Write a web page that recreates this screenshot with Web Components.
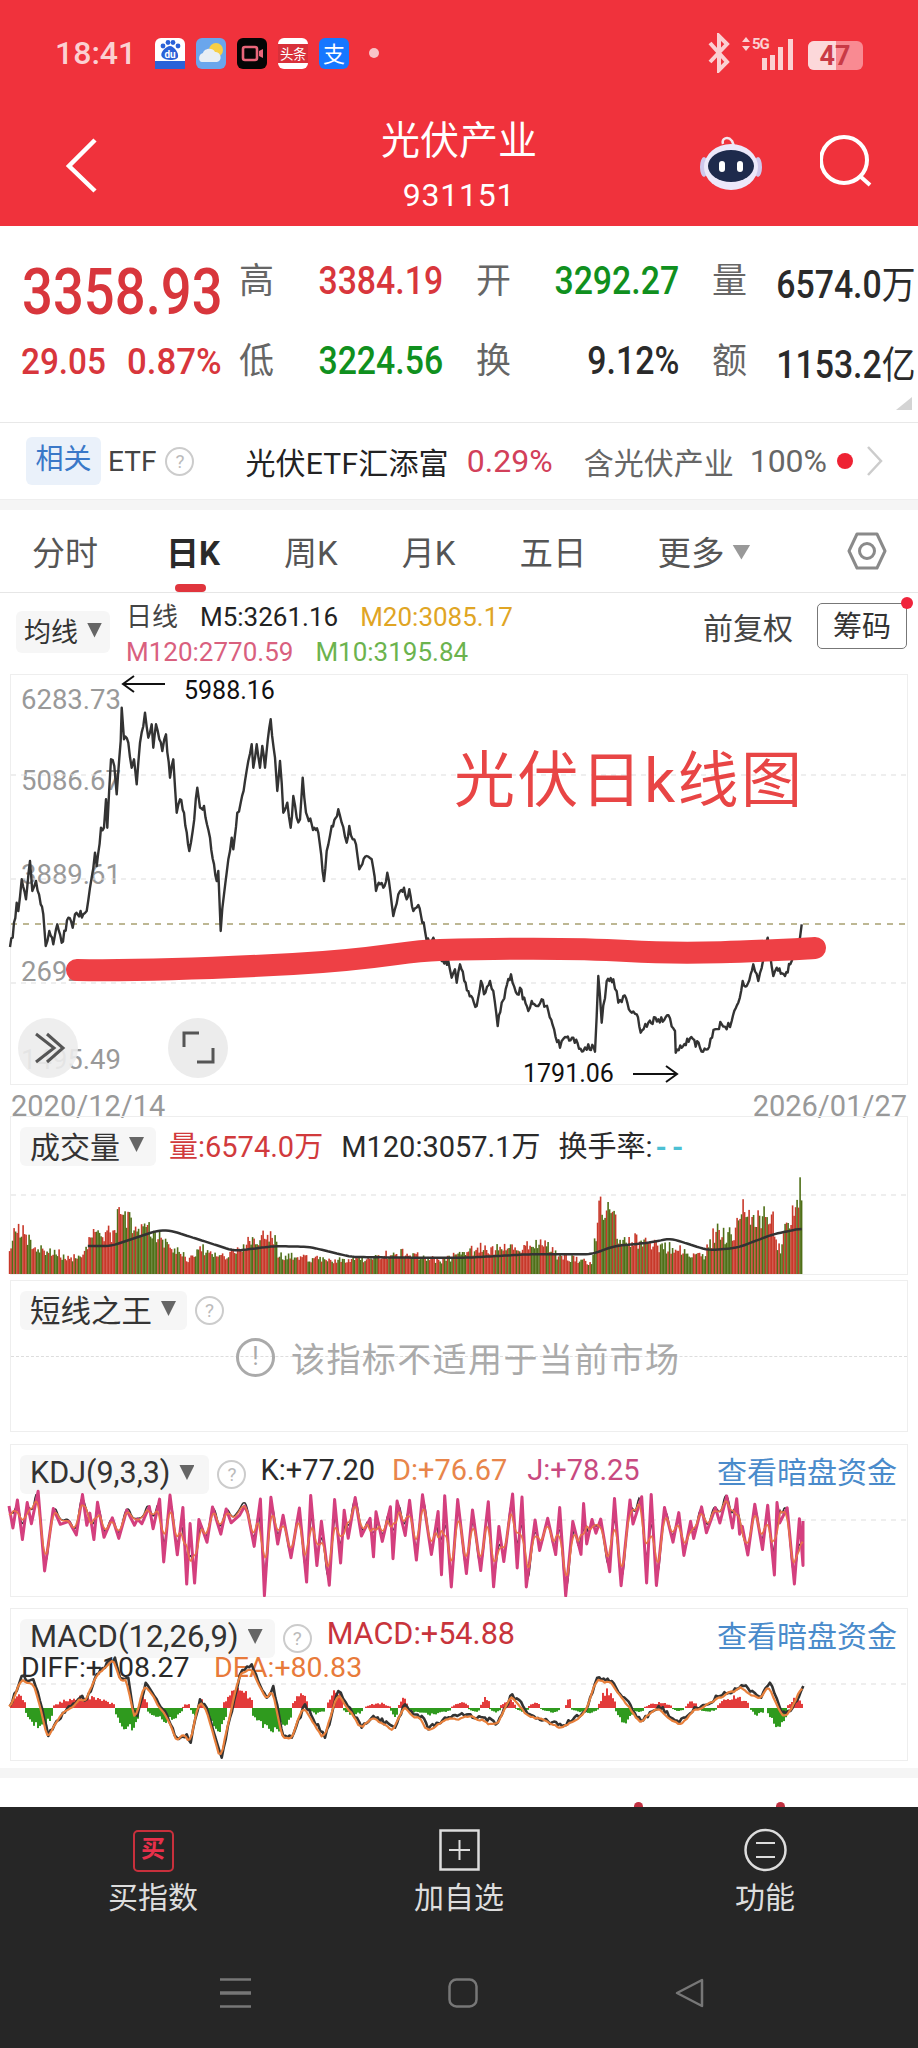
<!DOCTYPE html>
<html lang="zh">
<head>
<meta charset="utf-8">
<title>光伏产业</title>
<style>
  html, body { margin: 0; background: #fff; }
  body { width: 918px; height: 2048px; overflow: hidden; font-family: Roboto, "Noto Sans CJK SC", sans-serif; color: #2a2a2a; }
  .t { font-size: 29px; margin-top: -5px; }
  .link { margin-left: auto; color: #4a8bcb; font-size: 30px; margin-top: -10px; }
</style>
</head>
<body>
<top-header></top-header>
<quote-panel></quote-panel>
<etf-strip></etf-strip>
<grey-band></grey-band>
<period-tabs></period-tabs>
<ma-legend></ma-legend>
<price-chart></price-chart>
<date-axis></date-axis>

<indicator-panel height="159">
  <drop-chip slot="head">成交量</drop-chip>
  <span slot="head" class="t" style="margin-left:13px;color:#d13a3c">量:6574.0万</span>
  <span slot="head" class="t" style="margin-left:18px">M120:3057.1万</span>
  <span slot="head" class="t" style="margin-left:18px">换手率:<span style="color:#4cc0d4;font-weight:700;letter-spacing:5px;margin-left:3px">--</span></span>
  <volume-chart></volume-chart>
</indicator-panel>

<indicator-panel height="152" style="margin-top:5px">
  <drop-chip slot="head" style="--chip-font:30.5px;--chip-r:11px">短线之王</drop-chip>
  <help-mark slot="head" style="margin-left:8px"></help-mark>
  <notice-line></notice-line>
</indicator-panel>

<indicator-panel height="153" style="margin-top:12px">
  <drop-chip slot="head" style="--chip-font:30.5px;--chip-r:15px">KDJ(9,3,3)</drop-chip>
  <help-mark slot="head" style="margin-left:8px"></help-mark>
  <span slot="head" class="t" style="margin-left:14px;margin-top:-9px">K:+77.20</span>
  <span slot="head" class="t" style="margin-left:17px;color:#e8854a;margin-top:-9px">D:+76.67</span>
  <span slot="head" class="t" style="margin-left:20px;color:#c84a80;margin-top:-9px">J:+78.25</span>
  <span slot="head" class="link">查看暗盘资金</span>
  <kdj-chart></kdj-chart>
</indicator-panel>

<indicator-panel height="153" style="margin-top:11px">
  <drop-chip slot="head" style="--chip-font:31px">MACD(12,26,9)</drop-chip>
  <help-mark slot="head" style="margin-left:8px"></help-mark>
  <span slot="head" style="margin-left:15px;color:#c8343c;font-size:30.6px;margin-top:-10px">MACD:+54.88</span>
  <span slot="head" class="link">查看暗盘资金</span>
  <macd-chart></macd-chart>
</indicator-panel>

<grey-band style="margin-top:7px"></grey-band>
<peek-strip></peek-strip>
<bottom-bar></bottom-bar>

<script>
// small seeded random so the charts come out the same on every load
function seeded(s) {
  return () => {
    s |= 0; s = s + 0x6D2B79F5 | 0;
    let t = Math.imul(s ^ s >>> 15, 1 | s);
    t = t + Math.imul(t ^ t >>> 7, 61 | t) ^ t;
    return ((t ^ t >>> 14) >>> 0) / 4294967296;
  };
}
const toPath = pts => pts.map(p => p[0].toFixed(1) + ',' + p[1].toFixed(1)).join(' ');
function resample(pts, step) {
  const out = [];
  let i = 0;
  for (let x = pts[0][0]; x <= pts[pts.length - 1][0]; x += step) {
    while (i < pts.length - 2 && pts[i + 1][0] < x) i++;
    const a = pts[i], b = pts[i + 1];
    const t = b[0] === a[0] ? 0 : (x - a[0]) / (b[0] - a[0]);
    out.push([x, a[1] + (b[1] - a[1]) * t]);
  }
  return out;
}
function smooth(pts, w) {
  return pts.map((p, i) => {
    let sum = 0, n = 0;
    for (let j = Math.max(0, i - w); j <= Math.min(pts.length - 1, i + w); j++) { sum += pts[j][1]; n++; }
    return [p[0], sum / n];
  });
}
// keeps the given turning points, puts daily noise on the way between them
function roughen(pts, step, amp, rnd) {
  const out = [];
  pts.forEach((p, i) => {
    out.push(p);
    const n = pts[i + 1];
    if (!n) return;
    const count = Math.floor((n[0] - p[0]) / step);
    for (let k = 1; k < count; k++) {
      const t = k / count;
      out.push([p[0] + (n[0] - p[0]) * t, p[1] + (n[1] - p[1]) * t + (rnd() - .5) * amp]);
    }
  });
  return out;
}

class Base extends HTMLElement {
  constructor() {
    super();
    this.attachShadow({ mode: 'open' });
  }
  connectedCallback() {
    this.shadowRoot.innerHTML = this.render();
  }
}

class DropChip extends Base {
  render() {
    return `<style>
      :host { display: inline-flex; align-items: center; box-sizing: border-box; gap: var(--chip-gap, 9px); height: var(--chip-h, 39px); padding: 0 var(--chip-r, 12px) 4px var(--chip-l, 10px);
        background: #f6f6f6; border-radius: 6px; font-size: var(--chip-font, 30px); color: #333; white-space: nowrap; flex: none; }
      i { width: 15px; height: 15px; background: #666; clip-path: polygon(0 0, 100% 0, 50% 100%); }
    </style><slot></slot><i></i>`;
  }
}

class HelpMark extends Base {
  render() {
    return `<style>
      :host { display: inline-flex; align-items: center; justify-content: center; box-sizing: border-box; width: 29px; height: 29px; border: 2px solid #ccc;
        border-radius: 50%; color: #bbb; font-size: 19px; flex: none; }
    </style>?`;
  }
}

class TopHeader extends Base {
  render() {
    return `<style>
      :host { display: block; height: 226px; background: #f0323c; color: #fff; }
      .status { display: flex; align-items: center; height: 106px; padding-left: 55px; }
      .time { font-size: 32px; color: #fbd0d2; width: 100px; font-weight: 500; }
      .apps { display: flex; gap: 11px; align-items: center; }
      .apps svg { display: block; }
      .dot { width: 10px; height: 10px; border-radius: 50%; background: #f8c4c8; margin-left: 20px; }
      .right { margin-left: auto; margin-right: 50px; display: block; }
      .nav { display: grid; grid-template-columns: 1fr auto 1fr; height: 120px; }
      .back { margin: 31px 0 0 64px; }
      .title { text-align: center; }
      .name { font-size: 39px; line-height: 50px; margin-top: 10px; }
      .code { font-size: 32px; line-height: 36px; margin-top: 11px; letter-spacing: .8px; }
      .tools { display: flex; justify-content: flex-end; align-items: flex-start; padding: 29px 46px 0 0; gap: 58px; }
    </style>
    <div class="status">
      <span class="time">18:41</span>
      <span class="apps">
        <svg width="30" height="31" viewBox="0 0 30 31"><rect width="30" height="31" rx="6" fill="#fff"/><rect y="23" width="30" height="8" fill="#2a62d8"/><circle cx="8" cy="8" r="2.4" fill="#2a62d8"/><circle cx="13" cy="4.5" r="2.4" fill="#2a62d8"/><circle cx="18" cy="4.5" r="2.4" fill="#2a62d8"/><circle cx="23" cy="8" r="2.4" fill="#2a62d8"/><path d="M15 8c4 0 9 7 8 11s-13 4-16 0 4-11 8-11z" fill="#2a62d8"/><text x="15" y="20" font-size="10" font-weight="700" text-anchor="middle" fill="#fff">du</text></svg>
        <svg width="30" height="31" viewBox="0 0 30 31"><rect width="30" height="31" rx="6" fill="#6aa6ec"/><circle cx="20" cy="12" r="7" fill="#f7cf45"/><path d="M6 24c-4 0-4-8 1-9 1-5 10-6 12-1 6-1 8 9 2 10z" fill="#e8eef4"/></svg>
        <svg width="30" height="31" viewBox="0 0 30 31"><rect width="30" height="31" rx="6" fill="#050505"/><rect x="6" y="9" width="14" height="13" rx="2" fill="none" stroke="#e8667a" stroke-width="2.6"/><path d="M22 13l4-2v9l-4-2z" fill="#e8667a"/></svg>
        <svg width="30" height="31" viewBox="0 0 30 31"><rect width="30" height="31" rx="6" fill="#fff"/><rect y="6" width="30" height="19" fill="#d8303a"/><text x="15" y="21" font-size="13.5" text-anchor="middle" fill="#fff" letter-spacing="-.5">头条</text></svg>
        <svg width="30" height="31" viewBox="0 0 30 31"><rect width="30" height="31" rx="6" fill="#1677ff"/><text x="15" y="24" font-size="22" text-anchor="middle" fill="#fff">支</text></svg>
      </span>
      <span class="dot"></span>
      <svg class="right" width="160" height="40" viewBox="0 0 160 40">
        <path d="M2 10l17 19-8 8V3l8 8L2 29" fill="none" stroke="#fbd0d2" stroke-width="4"/>
        <path d="M34 9l4-5 4 5zM34 13l4 5 4-5z" fill="#fbd0d2"/>
        <text x="44" y="16" font-size="15" font-weight="700" fill="#fbd0d2" letter-spacing="-1">5G</text>
        <rect x="54" y="25" width="5" height="12" fill="#fbd0d2"/><rect x="62" y="22" width="5" height="15" fill="#fbd0d2"/>
        <rect x="70" y="14" width="5" height="23" fill="#fbd0d2"/><rect x="80" y="6" width="5" height="31" fill="#fbd0d2"/>
        <rect x="100" y="8" width="55" height="29" rx="6" fill="#f98a92"/>
        <path d="M106 8h22v29h-22a6 6 0 0 1-6-6V14a6 6 0 0 1 6-6z" fill="#fcd8da"/>
        <text x="127" y="32" font-size="27" font-weight="700" text-anchor="middle" fill="#c93a46">47</text>
      </svg>
    </div>
    <div class="nav">
      <svg class="back" width="34" height="56" viewBox="0 0 34 56"><path d="M31 3L5 29l26 25" fill="none" stroke="#fff" stroke-width="4.5"/></svg>
      <div class="title"><div class="name">光伏产业</div><div class="code">931151</div></div>
      <div class="tools">
        <svg width="62" height="55" viewBox="0 0 62 55">
          <path d="M23 9c-2-6 5-8 9-3l2 5" fill="none" stroke="#f3e6ee" stroke-width="2.5"/>
          <ellipse cx="4" cy="32" rx="4" ry="10" fill="#cfc8ec"/><ellipse cx="58" cy="32" rx="4" ry="10" fill="#cfc8ec"/>
          <ellipse cx="31" cy="32" rx="27" ry="23" fill="#ece8fa"/>
          <ellipse cx="31" cy="31" rx="23" ry="16" fill="#1e2a4c"/>
          <rect x="19" y="26" width="6" height="11" rx="3" fill="#fff"/><rect x="37" y="26" width="6" height="11" rx="3" fill="#fff"/>
        </svg>
        <svg width="52" height="52" viewBox="0 0 52 52"><circle cx="24" cy="25" r="23" fill="none" stroke="#fff" stroke-width="4"/><path d="M41 42l9 8" stroke="#fff" stroke-width="4"/></svg>
      </div>
    </div>`;
  }
}

class QuotePanel extends Base {
  render() {
    const row = (l1, v1, c1, l2, v2, c2, l3, v3) => `
      <span class="lb">${l1}</span><span class="v ${c1}"><b>${v1}</b></span>
      <span class="lb p">${l2}</span><span class="v ${c2}"><b>${v2}</b></span>
      <span class="lb p">${l3}</span><span class="v"><b>${v3}</b></span>`;
    return `<style>
      :host { display: block; position: relative; box-sizing: border-box; height: 197px; padding-top: 15px; border-bottom: 1px solid #e8e8e8; }
      .grid { display: grid; grid-template-columns: 240px 34px 169px 68px 168px 70px 167px; grid-template-rows: 80px 80px; align-items: center; }
      .lb { font-size: 35px; color: #666; line-height: 40px; margin-left: -1px; margin-top: 2px; }
      .p { padding-left: 34px; }
      .v { text-align: right; font-size: 38px; color: #2a2a2a; white-space: nowrap; }
      .v b { display: inline-block; font-weight: 500; transform: scaleX(.89); transform-origin: right center; }
      .v u { text-decoration: none; font-weight: 400; }
      .r { color: #d8363c; } .g { color: #10901e; }
      .big { padding-left: 22px; font-size: 64px; color: #d8363c; white-space: nowrap; margin-top: 22px; }
      .big b { display: inline-block; font-weight: 500; transform: scaleX(.85); transform-origin: left center; }
      .sub { padding-left: 21px; font-size: 37px; color: #d8363c; white-space: nowrap; display: flex; }
      .sub b { display: inline-block; font-weight: 500; transform: scaleX(.9); transform-origin: left center; width: 106px; }
      .sub b + b { transform: scaleX(.94); }
      .corner { position: absolute; right: 6px; bottom: 12px; width: 16px; height: 13px; background: #d4d4d4; clip-path: polygon(100% 0, 100% 100%, 0 100%); }
    </style>
    <div class="grid">
      <div class="big"><b>3358.93</b></div>${row('高', '3384.19', 'r', '开', '3292.27', 'g', '量', '6574.0<u>万</u>')}
      <div class="sub"><b>29.05</b><b>0.87%</b></div>${row('低', '3224.56', 'g', '换', '9.12%', '', '额', '1153.2<u>亿</u>')}
    </div><i class="corner"></i>`;
  }
}

class EtfStrip extends Base {
  render() {
    return `<style>
      :host { display: flex; align-items: center; box-sizing: border-box; height: 77px; padding-left: 26px; border-bottom: 1px solid #eee; white-space: nowrap; position: relative; }
      .tag { width: 75px; height: 48px; line-height: 46px; text-align: center; background: #eaf1fa; color: #3a78c8; border-radius: 6px; font-size: 28px; }
      .etf { margin-left: 7px; font-size: 28px; color: #444; }
      .name { margin-left: 51px; font-size: 30px; color: #222; letter-spacing: .2px; }
      .pct { margin-left: 18px; font-size: 32px; color: #d2405a; }
      .has { margin-left: 31px; font-size: 30px; color: #666; }
      .all { margin-left: 16px; font-size: 32px; color: #666; }
      .dot { width: 16px; height: 16px; border-radius: 50%; background: #ee2233; margin-left: 10px; }
      svg { margin-left: 14px; }
    </style>
    <span class="tag">相关</span><span class="etf">ETF</span><help-mark style="margin-left:9px"></help-mark>
    <span class="name">光伏ETF汇添富</span><span class="pct">0.29%</span><span class="has">含光伏产业</span><span class="all">100%</span>
    <i class="dot"></i>
    <svg width="16" height="30" viewBox="0 0 16 30"><path d="M1 1l13 14L1 29" fill="none" stroke="#ccc" stroke-width="2.5"/></svg>`;
  }
}

class GreyBand extends Base {
  render() {
    return `<style>:host { display: block; height: 10px; background: #f5f5f5; }</style>`;
  }
}

class PeriodTabs extends Base {
  render() {
    return `<style>
      :host { display: flex; align-items: flex-start; box-sizing: border-box; height: 83px; padding: 24px 0 0 32px; border-bottom: 1px solid #e6e6e6; font-size: 33px; color: #555; gap: 64px; white-space: nowrap; position: relative; }
      span { line-height: 40px; }
      .on { font-weight: 700; color: #2a2a2a; position: relative; margin-left: 4px; }
      .on::after { content: ""; position: absolute; left: 9px; top: 50px; width: 31px; height: 8px; border-radius: 4px; background: #e0353d; }
      .five { font-size: 33.5px; }
      .more { margin-left: 7px; display: flex; align-items: center; gap: 8px; font-size: 33.5px; height: 40px; }
      .more i { width: 18px; height: 15px; background: #999; clip-path: polygon(0 0, 100% 0, 50% 100%); margin-top: -4px; }
      svg { position: absolute; left: 847px; top: 22px; }
    </style>
    <span>分时</span><span class="on">日K</span><span>周K</span><span>月K</span><span class="five">五日</span><span class="more">更多<i></i></span>
    <svg width="40" height="38" viewBox="0 0 40 38"><path d="M10 2h20l8 17-8 17H10L2 19z" fill="none" stroke="#8a8a8a" stroke-width="3" stroke-linejoin="round"/><circle cx="20" cy="19" r="7.5" fill="none" stroke="#8a8a8a" stroke-width="3"/></svg>`;
  }
}

class MaLegend extends Base {
  render() {
    return `<style>
      :host { display: flex; box-sizing: border-box; height: 81px; padding-left: 16px; white-space: nowrap; font-size: 26px; position: relative; }
      drop-chip { --chip-h: 42px; --chip-font: 27px; --chip-l: 8px; --chip-r: 8px; margin-top: 18px; }
      .lines { margin-left: 16px; padding-top: 7px; line-height: 35px; }
      .l { display: flex; gap: 22px; }
      .right { margin-left: auto; padding: 10px 11px 0 0; display: flex; align-items: center; height: 46px; gap: 24px; font-size: 30px; color: #444; }
      .btn { position: relative; box-sizing: border-box; width: 90px; height: 46px; line-height: 47px; text-align: center; border: 1px solid #777; border-radius: 5px; color: #333; font-size: 29px; }
      .btn::after { content: ""; position: absolute; right: -7px; top: -7px; width: 12px; height: 12px; border-radius: 50%; background: #f0243c; }
    </style>
    <drop-chip>均线</drop-chip>
    <div class="lines">
      <div class="l"><span style="color:#444">日线</span><span style="color:#222">M5:3261.16</span><span style="color:#e0a524">M20:3085.17</span></div>
      <div class="l"><span style="color:#d9607e">M120:2770.59</span><span style="color:#6cb34e">M10:3195.84</span></div>
    </div>
    <div class="right"><span>前复权</span><span class="btn">筹码</span></div>`;
  }
}

class PriceChart extends Base {
  render() {
    const left = [[30,798],[38,770],[50,665],[55,690],[65,595],[78,655],[90,540],[97,630],[108,600],[122,670],[130,700],[137,795],[148,750],[160,790],[172,730],[185,785],[205,710],[218,740],[225,700],[250,700],[260,690],[270,620],[285,515],[290,555],[303,440],[312,440],[318,355],[322,440],[333,235],[343,255],[350,340],[362,180],[365,80],[372,175],[385,185],[395,260],[402,235],[410,310],[420,185],[435,95],[445,170],[455,130],[460,200],[468,130],[478,175],[487,210],[498,160],[510,290],[520,235],[530,395],[540,355],[552,395],[568,510],[578,450],[592,320],[600,380],[612,375],[630,470],[650,600],[655,570],[662,750],[672,640],[680,575],[695,470],[700,505],[712,395],[722,365],[735,300],[745,240],[755,190],[760,260],[770,190],[780,260],[787,195],[795,260],[812,115],[825,230],[832,330],[840,240],[850,395],[862,365],[872,440],[880,345],[890,410],[900,415],[908,290],[918,395],[935,430],[955,455],[972,600],[980,510],[995,435],[1015,385],[1025,425],[1040,485],[1048,435],[1058,475],[1068,490],[1078,565],[1100,525],[1115,535],[1128,630],[1140,610],[1150,620],[1162,575],[1180,705],[1195,640],[1212,620],[1220,655],[1228,625]];
    const right = [[10,690],[25,672],[45,750],[50,780],[70,770],[95,840],[115,840],[125,890],[135,865],[140,905],[150,850],[175,930],[200,975],[213,900],[222,940],[240,900],[250,930],[263,1035],[275,965],[303,880],[322,940],[330,920],[355,990],[365,960],[385,975],[395,955],[415,990],[450,1100],[465,1068],[490,1070],[520,1110],[535,1090],[555,1112],[565,885],[575,1025],[590,900],[610,895],[625,965],[640,945],[665,995],[680,1000],[692,1055],[715,1025],[745,1015],[780,1012],[795,1050],[797,1115],[815,1100],[840,1072],[870,1100],[893,1105],[915,1045],[935,1030],[950,1045],[965,1020],[985,965],[998,900],[1010,915],[1030,850],[1045,900],[1060,835],[1073,770],[1090,885],[1100,860],[1125,885],[1145,840],[1170,770],[1175,730]];
    const rnd = seeded(7);
    const raw = left.map(p => [p[0] / 3, 680 + p[1] / 3]).concat(right.map(p => [410 + p[0] / 3, 680 + p[1] / 3]));
    const line = roughen(raw, 1.3, 8, rnd);
    const labels = [['6283.73', 698], ['5086.67', 779], ['3889.61', 873], ['2692.55', 970], ['1495.49', 1058]];
    const grid = [774, 878, 982].map(y => `<line x1="11" x2="907" y1="${y}" y2="${y}" stroke="#ddd" stroke-width="1" stroke-dasharray="5 5"/>`).join('');
    return `<style>
      :host { display: block; position: relative; height: 411px; }
      .frame { box-sizing: border-box; height: 411px; margin: 0 10px; border: 1px solid #eee; }
      svg { position: absolute; left: 0; top: 0; }
      span { position: absolute; white-space: nowrap; transform: translateY(-50%); }
      .ax { left: 21px; font-size: 27.5px; color: #999; }
      .note { font-size: 25px; color: #111; }
      .big { left: 454px; top: 101px; font-size: 61px; letter-spacing: 2.4px; color: #e84545; }
    </style>
    <div class="frame"></div>
    ${labels.map(l => `<span class="ax" style="top:${l[1] - 673}px">${l[0]}</span>`).join('')}
    <svg width="918" height="411" viewBox="0 673 918 411">
      ${grid}
      <line x1="11" x2="907" y1="923" y2="923" stroke="#a8a070" stroke-width="1.5" stroke-dasharray="6 6"/>
      <polyline points="${toPath(line)}" fill="none" stroke="#333" stroke-width="2.4" stroke-linejoin="round"/>
      <path d="M77 969C140 970 200 968 293 963S400 950 440 949 560 946 627 950 760 950 815 947" fill="none" stroke="#ee4045" stroke-width="22" stroke-linecap="round"/>
      <path d="M165 683H123M134 675l-11 8 11 8" fill="none" stroke="#111" stroke-width="2"/>
      <path d="M633 1073H677M666 1065l11 8-11 8" fill="none" stroke="#111" stroke-width="2"/>
      <circle cx="48" cy="1047" r="30" fill="#ececec" fill-opacity=".9"/>
      <path d="M36 1033l18 14-18 14M47 1033l16 14-16 14" fill="none" stroke="#555" stroke-width="3"/>
      <circle cx="198" cy="1047" r="30" fill="#ececec"/>
      <path d="M199 1032h-15v14M197 1061h16v-14" fill="none" stroke="#555" stroke-width="3"/>
    </svg>
    <span class="big">光伏日k线图</span>
    <span class="note" style="left:184px;top:16px">5988.16</span>
    <span class="note" style="left:523px;top:399px">1791.06</span>`;
  }
}

class DateAxis extends Base {
  render() {
    return `<style>
      :host { display: flex; justify-content: space-between; box-sizing: border-box; height: 31px; padding: 5px 11px 0; font-size: 29px; line-height: 32px; color: #999; }
    </style><span>2020/12/14</span><span>2026/01/27</span>`;
  }
}

class IndicatorPanel extends Base {
  render() {
    const h = this.getAttribute('height');
    return `<style>
      :host { display: block; position: relative; box-sizing: border-box; height: ${h}px; margin: 0 10px; border: 1px solid #eee; }
      .head { display: flex; align-items: center; height: 39px; padding: 10px 10px 0 9px; white-space: nowrap; color: #2a2a2a; }
    </style>
    <div class="head"><slot name="head"></slot></div>
    <slot></slot>`;
  }
}

class VolumeChart extends Base {
  render() {
    const env = [[15,400],[28,305],[45,350],[60,400],[90,400],[110,430],[140,425],[155,350],[190,340],[210,240],[230,340],[250,310],[270,350],[290,390],[320,430],[340,390],[370,430],[400,400],[430,360],[465,340],[475,420],[520,430],[600,440],[680,410],[750,440],[820,390],[880,400],[925,370],[950,420],[1010,450],[1022,250],[1035,280],[1042,180],[1055,380],[1080,365],[1110,380],[1160,400],[1200,430],[1220,335],[1250,350],[1268,260],[1290,300],[1313,245],[1330,400],[1360,205],[1370,190]]
      .map(p => [p[0] / 1.708, 1110 + p[1] / 3]);
    const ma = [[150,405],[190,405],[270,358],[290,358],[330,380],[400,420],[470,405],[530,408],[600,438],[700,440],[800,440],[900,430],[1010,430],[1050,405],[1110,395],[1145,382],[1210,418],[1260,410],[1320,370],[1370,352]]
      .map(p => [p[0] / 1.708, 1110 + p[1] / 3]);
    const rnd = seeded(21);
    const bars = resample(env, 1.5).map(p => {
      const base = 1273;
      const top = base - (base - p[1]) * (.6 + .4 * rnd());
      return `<rect x="${p[0].toFixed(1)}" y="${top.toFixed(1)}" width="1.6" height="${(base - top).toFixed(1)}" fill="${rnd() < .55 ? '#c8382a' : '#4f6f18'}"/>`;
    }).join('');
    return `<style>
      :host { display: block; }
      svg { position: absolute; left: -11px; top: -1px; }
    </style>
    <svg width="918" height="159" viewBox="0 1115 918 159">
      <line x1="11" x2="907" y1="1194" y2="1194" stroke="#ddd" stroke-dasharray="5 5"/>
      ${bars}
      <polyline points="${toPath(smooth(resample(ma, 3), 2))}" fill="none" stroke="#333" stroke-width="2.5"/>
    </svg>`;
  }
}

class NoticeLine extends Base {
  render() {
    return `<style>
      :host { display: block; position: relative; }
      .g { position: absolute; left: 0; right: 0; top: 26px; border-top: 1px dashed #ddd; }
      .m { position: absolute; left: 225px; top: 7px; display: flex; align-items: center; height: 40px; color: #aaa; white-space: nowrap; font-size: 34px; letter-spacing: 1.4px; }
      .c { box-sizing: border-box; width: 39px; height: 39px; border: 3px solid #aaa; border-radius: 50%; text-align: center; line-height: 32px; font-size: 25px; margin-right: 16px; letter-spacing: 0; }
    </style><div class="g"></div><div class="m"><span class="c">!</span>该指标不适用于当前市场</div>`;
  }
}

class KdjChart extends Base {
  render() {
    const rnd = seeded(29);
    const turns = [[9, 1505]];
    let x = 9, up = false;
    while (x < 803) {
      x += 2.5 + rnd() * 6.5;
      const flat = x > 225 && x < 252;
      let y;
      if (flat) y = 1504 + rnd() * 20;
      else if (up) y = 1490 + rnd() * 36;
      else y = 1522 + 73 * Math.pow(rnd(), 1.4);
      turns.push([Math.min(x, 803), Math.min(y, 1595)]);
      up = !up;
    }
    turns.push([803, 1520]);
    const fine = resample(turns, 1);
    const k = smooth(fine, 3).map(p => [p[0], 1532 + (p[1] - 1532) * 1.3]);
    const d = smooth(fine, 4).map(p => [p[0], 1532 + (p[1] - 1532) * 1.2]);
    return `<style>
      :host { display: block; }
      svg { position: absolute; left: -11px; top: -1px; }
    </style>
    <svg width="918" height="153" viewBox="0 1443 918 153">
      <line x1="11" x2="907" y1="1519" y2="1519" stroke="#ddd" stroke-dasharray="5 5"/>
      <polyline points="${toPath(k)}" fill="none" stroke="#333" stroke-width="1.5"/>
      <polyline points="${toPath(turns)}" fill="none" stroke="#d43f7e" stroke-width="3" stroke-linejoin="round"/>
      <polyline points="${toPath(d)}" fill="none" stroke="#e8734a" stroke-width="1.6"/>
    </svg>`;
  }
}

class MacdChart extends Base {
  render() {
    const a = [[30,255],[50,210],[65,165],[85,180],[100,175],[120,240],[145,345],[170,300],[200,265],[240,230],[260,235],[290,160],[345,110],[360,170],[385,170],[400,270],[412,285],[437,185],[470,235],[500,280],[530,350],[560,340],[572,365],[600,235],[620,260],[640,330],[665,410],[690,290],[720,160],[755,130],[800,230],[820,195],[850,345],[875,350],[915,250],[940,295],[975,350],[1015,210],[1050,260],[1085,320],[1120,285],[1185,320],[1215,250],[1240,280],[1265,285],[1285,325],[1310,305]]
      .map(p => [p[0] / 3, 1620 + p[1] / 3]);
    const b = [[770,890],[800,880],[850,905],[875,820],[905,880],[960,915],[1000,870],[1020,770],[1045,780],[1095,900],[1125,855],[1160,905],[1190,860],[1230,825],[1270,795],[1300,830],[1315,785],[1335,875],[1350,870],[1372,795]]
      .map(p => [p[0] / 1.708, 1420 + p[1] / 3]);
    const rnd = seeded(3);
    const all = a.concat(b);
    const diff = roughen(all, 2, 5, rnd);
    const dea = smooth(roughen(all, 2, 6, rnd), 1).map(p => [p[0] - 1, p[1] + 2]);
    const segs = [[10,25,15],[25,53,-23],[53,115,13],[115,138,-27],[138,147,13],[147,182,-15],[182,190,5],[190,197,-10],[197,203,10],[207,227,-25],[223,252,23],[252,292,-27],[292,307,17],[307,325,-7],[327,343,20],[343,363,-8],[365,390,6],[390,398,-10],[398,407,12],[407,451,-8],[451,468,7],[468,480,-5],[480,489,13],[489,500,-5],[500,515,10],[515,528,-4],[528,540,7],[540,560,-5],[565,571,10],[571,598,-6],[598,615,20],[615,632,-17],[632,644,-5],[644,672,6],[672,684,-4],[685,697,8],[697,717,-4],[717,749,13],[750,764,-8],[767,787,-20],[787,803,11]];
    let bars = '';
    segs.forEach(s => {
      for (let x = s[0]; x < s[1]; x += 2) {
        const t = (x - s[0]) / (s[1] - s[0]);
        const h = Math.abs(s[2]) * (.3 + .7 * Math.sin(Math.PI * t)) * (.6 + .4 * rnd());
        bars += `<rect x="${x}" y="${s[2] > 0 ? (1707 - h).toFixed(1) : 1707}" width="2" height="${h.toFixed(1)}" fill="${s[2] > 0 ? '#e33b3b' : '#2f9a1e'}"/>`;
      }
    });
    return `<style>
      :host { display: block; }
      svg { position: absolute; left: -11px; top: -1px; }
      span { position: absolute; top: 42px; white-space: nowrap; font-size: 28.5px; line-height: 34px; }
    </style>
    <span style="left:10px;color:#2a2a2a">DIFF:+108.27</span><span style="left:203px;color:#e87a3a">DEA:+80.83</span>
    <svg width="918" height="153" viewBox="0 1607 918 153">
      <line x1="11" x2="907" y1="1683" y2="1683" stroke="#ddd" stroke-dasharray="5 5"/>
      ${bars}
      <polyline points="${toPath(diff)}" fill="none" stroke="#333" stroke-width="2.6" stroke-linejoin="round"/>
      <polyline points="${toPath(dea)}" fill="none" stroke="#e8803c" stroke-width="2.2" stroke-linejoin="round"/>
    </svg>`;
  }
}

class PeekStrip extends Base {
  render() {
    return `<style>
      :host { display: block; position: relative; height: 29px; overflow: hidden; }
      i { position: absolute; top: 24px; width: 9px; height: 9px; border-radius: 50%; background: #c03040; }
    </style><i style="left:634px"></i><i style="left:776px"></i>`;
  }
}

class BottomBar extends Base {
  render() {
    return `<style>
      :host { display: block; height: 242px; background: #262626; color: #ddd; }
      .items { display: grid; grid-template-columns: repeat(3, 1fr); padding-top: 21px; height: 90px; }
      .item { display: flex; flex-direction: column; align-items: center; font-size: 30px; }
      .icon { height: 44px; display: block; }
      .label { line-height: 40px; margin-top: 6px; }
      .buy { box-sizing: border-box; width: 41px; height: 42px; margin-top: 2px; border: 2.5px solid #c8303c; border-radius: 5px; text-align: center; line-height: 35px; font-size: 24px; font-weight: 700; color: #e8304a; }
      .keys { display: flex; justify-content: center; gap: 196px; margin-top: 60px; padding-left: 4px; }
      .keys svg { display: block; }
    </style>
    <div class="items">
      <div class="item"><span class="buy">买</span><span class="label">买指数</span></div>
      <div class="item"><svg class="icon" width="41" height="44" viewBox="0 0 41 44"><rect x="1.5" y="2.5" width="38" height="39" fill="none" stroke="#ddd" stroke-width="2.5"/><path d="M20.5 12v20M10 22h21" stroke="#ddd" stroke-width="2"/></svg><span class="label">加自选</span></div>
      <div class="item"><svg class="icon" width="43" height="44" viewBox="0 0 43 44"><circle cx="21.5" cy="22" r="20" fill="none" stroke="#ddd" stroke-width="2.5"/><path d="M12 15h19M12 29h19" stroke="#ddd" stroke-width="2.2"/></svg><span class="label">功能</span></div>
    </div>
    <div class="keys">
      <svg width="33" height="30" viewBox="0 0 33 30"><path d="M1 1.5h31" stroke="#777" stroke-width="2.5"/><path d="M1 15h31" stroke="#777" stroke-width="3.5"/><path d="M1 28.5h31" stroke="#777" stroke-width="2.5"/></svg>
      <svg width="30" height="30" viewBox="0 0 30 30"><rect x="1.5" y="1.5" width="27" height="27" rx="7" fill="none" stroke="#777" stroke-width="2.5"/></svg>
      <svg width="30" height="30" viewBox="0 0 30 30"><path d="M28 2v26L3 15z" fill="none" stroke="#777" stroke-width="2.5" stroke-linejoin="round"/></svg>
    </div>`;
  }
}

customElements.define('drop-chip', DropChip);
customElements.define('help-mark', HelpMark);
customElements.define('top-header', TopHeader);
customElements.define('quote-panel', QuotePanel);
customElements.define('etf-strip', EtfStrip);
customElements.define('grey-band', GreyBand);
customElements.define('period-tabs', PeriodTabs);
customElements.define('ma-legend', MaLegend);
customElements.define('price-chart', PriceChart);
customElements.define('date-axis', DateAxis);
customElements.define('indicator-panel', IndicatorPanel);
customElements.define('volume-chart', VolumeChart);
customElements.define('notice-line', NoticeLine);
customElements.define('kdj-chart', KdjChart);
customElements.define('macd-chart', MacdChart);
customElements.define('peek-strip', PeekStrip);
customElements.define('bottom-bar', BottomBar);
</script>
</body>
</html>
